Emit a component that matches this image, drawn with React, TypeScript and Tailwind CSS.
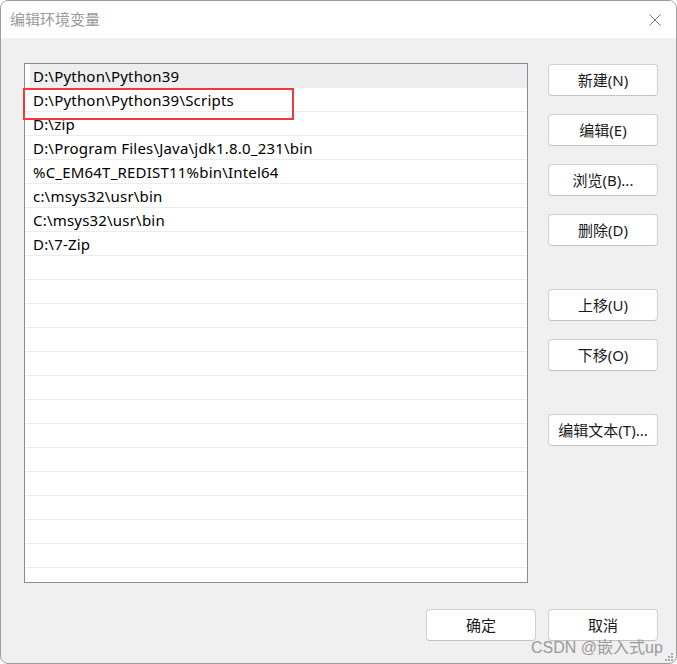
import React from "react"

const paths = [
  "D:\\Python\\Python39",
  "D:\\Python\\Python39\\Scripts",
  "D:\\zip",
  "D:\\Program Files\\Java\\jdk1.8.0_231\\bin",
  "%C_EM64T_REDIST11%bin\\Intel64",
  "c:\\msys32\\usr\\bin",
  "C:\\msys32\\usr\\bin",
  "D:\\7-Zip",
]

const font = { fontFamily: '"Noto Sans", "Noto Sans CJK SC", sans-serif' }

function Btn({ label, className = "" }: { label: string; className?: string }) {
  return (
    <button
      className={`w-[110px] h-[32px] bg-white border border-[#d0d0d0] border-b-[#c2c2c2] rounded-[4px] text-[15px] text-[#1a1a1a] flex items-center justify-center ${className}`}
    >
      {label}
    </button>
  )
}

export default function App() {
  const rows = [...paths, ...Array(14).fill("")]

  return (
    <div className="w-[677px] h-[664px] bg-white" style={font}>
      <div className="relative w-[677px] h-[664px] border border-[#9d9d9d] rounded-[8px] overflow-hidden bg-[#f0f0f0] flex flex-col">
        {/* title bar */}
        <div className="h-[37px] bg-white flex items-center justify-between pl-[9px] pr-[14px] shrink-0">
          <span className="text-[15px] text-[#9a9a9a]">编辑环境变量</span>
          <svg width="12" height="12" viewBox="0 0 12 12" className="mr-[1px]">
            <path d="M0.5 0.5 L11.5 11.5 M11.5 0.5 L0.5 11.5" stroke="#777" strokeWidth="1" fill="none" />
          </svg>
        </div>

        <div className="flex flex-col pl-[23px] pt-[25px]">
          <div className="flex">
            {/* list */}
            <div className="relative w-[504px] h-[520px] border border-[#8b8b95] bg-white">
              <div className="h-full overflow-hidden">
                {rows.map((p, i) => (
                  <div key={i} className="h-[24px] border-b border-[#ececec] flex">
                    <div
                      className={`flex-1 ml-[5px] pl-[3px] pt-[2px] flex items-center text-[15px] tracking-[0.2px] text-black ${i === 0 ? "bg-[#eeeeee]" : ""}`}
                    >
                      {p}
                    </div>
                  </div>
                ))}
              </div>
              <div className="absolute left-[-2px] top-[24px] w-[271px] h-[32px] border-2 border-[#ec3a3f]" />
            </div>

            {/* side buttons */}
            <div className="flex flex-col ml-[20px] pt-[1px]">
              <Btn label="新建(N)" />
              <Btn label="编辑(E)" className="mt-[18px]" />
              <Btn label="浏览(B)..." className="mt-[18px]" />
              <Btn label="删除(D)" className="mt-[18px]" />
              <Btn label="上移(U)" className="mt-[43px]" />
              <Btn label="下移(O)" className="mt-[18px]" />
              <Btn label="编辑文本(T)..." className="mt-[43px]" />
            </div>
          </div>

          <div className="flex justify-end gap-[12px] mt-[26px] pr-[18px]">
            <Btn label="确定" />
            <Btn label="取消" />
          </div>
        </div>

        {/* watermark */}
        <div
          className="absolute left-[530px] top-[639px] text-[16px] text-[#9a9a9a] leading-none"
          style={{ fontFamily: '"Liberation Sans", "Noto Sans CJK SC", sans-serif' }}
        >
          CSDN @嵌入式up
        </div>
        <svg width="10" height="10" viewBox="0 0 10 10" className="absolute right-[2px] bottom-[1px]">
          <g fill="#a8a8a8">
            <rect x="7" y="1" width="2" height="2" />
            <rect x="4" y="4" width="2" height="2" />
            <rect x="7" y="4" width="2" height="2" />
            <rect x="1" y="7" width="2" height="2" />
            <rect x="4" y="7" width="2" height="2" />
            <rect x="7" y="7" width="2" height="2" />
          </g>
        </svg>
      </div>
    </div>
  )
}
